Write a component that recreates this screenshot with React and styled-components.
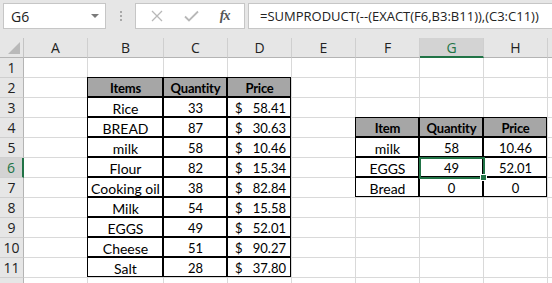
import React from 'react';
import styled, { createGlobalStyle, css } from 'styled-components';

const Global = createGlobalStyle`
  html, body { margin: 0; padding: 0; background: #fff; overflow: hidden; }
  #root { width: 552px; height: 283px; overflow: hidden; }
`;

const UI_FONT = `"Open Sans", "Noto Sans", sans-serif`;
const CELL_FONT = `Lato, "Noto Sans", sans-serif`;
const GREEN = '#217346';

const Page = styled.div`
  width: 552px;
  height: 283px;
  overflow: hidden;
  background: #fff;
  display: flex;
  flex-direction: column;
`;

const Toolbar = styled.div`
  flex: none;
  height: 38px;
  box-sizing: border-box;
  background: #e6e6e6;
  display: flex;
  align-items: flex-start;
  padding: 3px 0 0 3px;
`;

const Box = styled.div`
  height: 26px;
  box-sizing: border-box;
  background: #fff;
  border: 1px solid #c6c6c6;
  display: flex;
  align-items: center;
  font-family: ${UI_FONT};
  font-size: 14px;
  color: #222;
`;

const NameBox = styled(Box)`
  width: 103px;
  justify-content: space-between;
  padding: 0 6px 0 7px;
`;

const DropArrow = styled.span`
  width: 0;
  height: 0;
  border-left: 4px solid transparent;
  border-right: 4px solid transparent;
  border-top: 4px solid #7a7a7a;
`;

const Grip = styled.div`
  width: 29px;
  height: 26px;
  display: flex;
  flex-direction: column;
  align-items: center;
  justify-content: center;
  gap: 2px;
`;

const GripDot = styled.span`
  width: 2px;
  height: 2px;
  background: #a8a8a8;
`;

const ButtonBox = styled(Box)`
  width: 110px;
  justify-content: space-around;
  padding: 0 4px 0 4px;
`;

const Fx = styled.span`
  font-family: "Liberation Serif", "DejaVu Serif", serif;
  font-style: italic;
  font-weight: 700;
  font-size: 14px;
  color: #555;
  letter-spacing: -1px;
`;

const FormulaBox = styled(Box)`
  flex: 1;
  margin-left: 3px;
  margin-right: -3px;
  padding-left: 11px;
  font-size: 13px;
  white-space: nowrap;
  overflow: hidden;
`;

const Sheet = styled.div`
  position: relative;
  display: grid;
  grid-template-columns: 24px 64px 76px 64px 64px 64px 64px 64px 64px 40px;
  grid-auto-rows: 20px;
  background: #fff;
`;

const Corner = styled.div`
  box-sizing: border-box;
  background: #e6e6e6;
  border-right: 1px solid #c4c4c4;
  border-bottom: 1px solid #b4b4b4;
  display: flex;
  align-items: flex-end;
  justify-content: flex-end;
  padding: 0 3px 3px 0;
`;

const CornerMark = styled.span`
  width: 0;
  height: 0;
  border-left: 12px solid transparent;
  border-bottom: 12px solid #b9b9b9;
`;

const ColHead = styled.div`
  box-sizing: border-box;
  background: ${p => (p.$active ? '#d3d3d3' : '#e6e6e6')};
  border-right: 1px solid #cfcfcf;
  border-bottom: ${p => (p.$active ? `2px solid ${GREEN}` : '1px solid #b4b4b4')};
  color: ${p => (p.$active ? GREEN : '#222')};
  font-family: ${UI_FONT};
  font-size: 14px;
  display: flex;
  align-items: center;
  justify-content: center;
  padding-top: ${p => (p.$active ? '1px' : '0')};
`;

const RowHead = styled.div`
  box-sizing: border-box;
  background: ${p => (p.$active ? '#d3d3d3' : '#e6e6e6')};
  border-bottom: 1px solid #cfcfcf;
  border-right: ${p => (p.$active ? `2px solid ${GREEN}` : '1px solid #b4b4b4')};
  color: ${p => (p.$active ? GREEN : '#222')};
  font-family: ${UI_FONT};
  font-size: 14px;
  display: flex;
  align-items: center;
  justify-content: center;
`;

const Cell = styled.div`
  position: relative;
  box-sizing: border-box;
  border-right: 1px solid #d9d9d9;
  border-bottom: 1px solid #d9d9d9;
  background: ${p => (p.$head ? '#a6a6a6' : '#fff')};
  font-family: ${CELL_FONT};
  font-size: ${p => (p.$head ? '13px' : '14px')};
  font-weight: ${p => (p.$head ? 700 : 400)};
  letter-spacing: ${p => (p.$head ? '-0.2px' : '0')};
  color: #000;
  display: flex;
  align-items: center;
  padding-top: 1px;
  justify-content: ${p => (p.$money ? 'space-between' : 'center')};
  ${p => p.$money && css`padding: 1px 5px 0 7px;`}
  white-space: nowrap;
  ${p =>
    p.$boxed &&
    css`
      &::after {
        content: '';
        position: absolute;
        top: -1px;
        left: -1px;
        right: 0;
        bottom: 0;
        border: 1px solid #000;
        pointer-events: none;
      }
    `}
`;

const Num = styled.span`
  font-size: 13px;
`;

const Selection = styled.div`
  position: absolute;
  left: 419px;
  top: 119px;
  width: 66px;
  height: 22px;
  box-sizing: border-box;
  border: 2px solid ${GREEN};
  pointer-events: none;
`;

const Handle = styled.div`
  position: absolute;
  left: 480px;
  top: 136px;
  width: 7px;
  height: 7px;
  box-sizing: border-box;
  background: ${GREEN};
  border: 1px solid #fff;
`;

const COLS = ['A', 'B', 'C', 'D', 'E', 'F', 'G', 'H', ''];

const mainItems = [
  ['Rice', '33', '58.41'],
  ['BREAD', '87', '30.63'],
  ['milk', '58', '10.46'],
  ['Flour', '82', '15.34'],
  ['Cooking oil', '38', '82.84'],
  ['Milk', '54', '15.58'],
  ['EGGS', '49', '52.01'],
  ['Cheese', '51', '90.27'],
  ['Salt', '28', '37.80'],
];

const lookup = [
  ['Item', 'Quantity', 'Price'],
  ['milk', '58', '10.46'],
  ['EGGS', '49', '52.01'],
  ['Bread', '0', '0'],
];

function cellFor(r, c) {
  if (r >= 2 && r <= 11 && c >= 1 && c <= 3) {
    if (r === 2) return { text: ['Items', 'Quantity', 'Price'][c - 1], head: true, boxed: true };
    const row = mainItems[r - 3];
    if (c === 3) return { money: row[2], boxed: true };
    return { text: row[c - 1], boxed: true };
  }
  if (r >= 4 && r <= 7 && c >= 5 && c <= 7) {
    return { text: lookup[r - 4][c - 5], head: r === 4, boxed: true };
  }
  return {};
}

const Xicon = () => (
  <svg width="12" height="12" viewBox="0 0 12 12">
    <path d="M1 1 L11 11 M11 1 L1 11" stroke="#b8b8b8" strokeWidth="1.3" fill="none" />
  </svg>
);

const CheckIcon = () => (
  <svg width="15" height="12" viewBox="0 0 15 12">
    <path d="M1 6.5 L5 10.5 L14 1.5" stroke="#b8b8b8" strokeWidth="1.8" fill="none" />
  </svg>
);

export default function App() {
  const rows = [];
  rows.push(
    <Corner key="corner">
      <CornerMark />
    </Corner>
  );
  COLS.forEach((l, i) => {
    rows.push(
      <ColHead key={'h' + i} $active={l === 'G'}>
        {l}
      </ColHead>
    );
  });
  for (let r = 1; r <= 12; r++) {
    rows.push(
      <RowHead key={'r' + r} $active={r === 6}>
        {r <= 11 ? r : ''}
      </RowHead>
    );
    for (let c = 0; c < 9; c++) {
      const d = cellFor(r, c);
      const isNumeric = d.text && /^[0-9.]+$/.test(d.text);
      rows.push(
        <Cell key={r + '-' + c} $head={d.head} $boxed={d.boxed} $money={!!d.money}>
          {d.money ? (
            <>
              <Num>$</Num>
              <Num>{d.money}</Num>
            </>
          ) : isNumeric ? (
            <Num>{d.text}</Num>
          ) : (
            d.text
          )}
        </Cell>
      );
    }
  }

  return (
    <Page>
      <Global />
      <Toolbar>
        <NameBox>
          <span>G6</span>
          <DropArrow />
        </NameBox>
        <Grip>
          <GripDot />
          <GripDot />
          <GripDot />
        </Grip>
        <ButtonBox>
          <Xicon />
          <CheckIcon />
          <Fx>fx</Fx>
        </ButtonBox>
        <FormulaBox>=SUMPRODUCT(--(EXACT(F6,B3:B11)),(C3:C11))</FormulaBox>
      </Toolbar>
      <Sheet>
        {rows}
        <Selection />
        <Handle />
      </Sheet>
    </Page>
  );
}
